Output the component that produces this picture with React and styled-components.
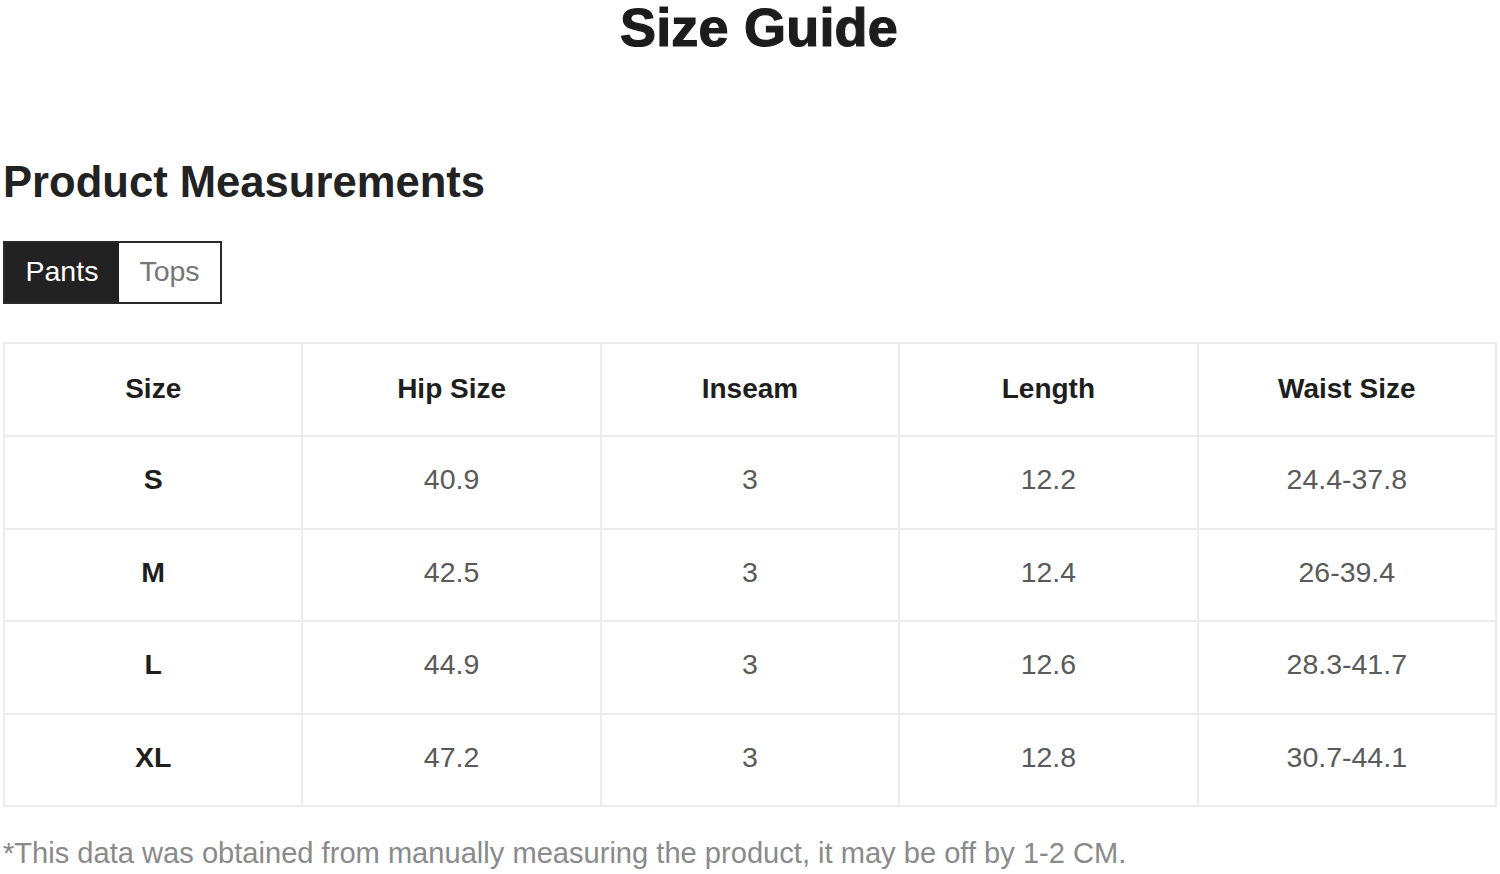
import React from "react";
import styled, { createGlobalStyle } from "styled-components";

const Global = createGlobalStyle`
  html, body { margin: 0; padding: 0; background: #fff; }
  body { font-family: "Liberation Sans", Arial, sans-serif; }
`;

const Page = styled.div`
  width: 1500px;
  box-sizing: border-box;
  padding: 0 3px;
`;

const Title = styled.h1`
  margin: 0;
  padding-left: 18px;
  text-align: center;
  font-size: 54px;
  line-height: 54px;
  font-weight: 900;
  color: #1c1c1e;
  letter-spacing: 0.2px;
  -webkit-text-stroke: 1.2px #1c1c1e;
`;

const Heading = styled.h2`
  margin: 102px 0 0 0;
  font-size: 43.6px;
  line-height: 1.2;
  font-weight: 700;
  color: #222;
`;

const Tabs = styled.div`
  display: inline-flex;
  margin-top: 33px;
  border: 2px solid #2a2a2a;
  height: 63px;
  box-sizing: border-box;
`;

const Tab = styled.button`
  border: none;
  margin: 0;
  font-family: "Liberation Sans", Arial, sans-serif;
  font-size: 28.5px;
  padding: 0 ${(p) => (p.$active ? "20.5px" : "20.5px")} 2px;
  background: ${(p) => (p.$active ? "#222" : "#fff")};
  color: ${(p) => (p.$active ? "#fff" : "#777")};
  cursor: pointer;
  display: flex;
  align-items: center;
`;

const TableWrap = styled.div`
  margin-top: 38px;
`;

const Table = styled.table`
  width: 100%;
  border-collapse: collapse;
  table-layout: fixed;
  border: 2px solid #ececec;
`;

const Row = styled.tr`
  height: 92.6px;
`;

const HeadCell = styled.th`
  border: 2px solid #ececec;
  font-size: 28px;
  font-weight: 700;
  color: #1e1e1e;
  text-align: center;
  padding: 0 0 2px 0;
`;

const Cell = styled.td`
  border: 2px solid #ececec;
  font-size: 28.5px;
  font-weight: ${(p) => (p.$strong ? 700 : 400)};
  color: ${(p) => (p.$strong ? "#1e1e1e" : "#5a5a5a")};
  text-align: center;
  padding: 0 0 5px 0;
`;

const Note = styled.p`
  margin: 29px 0 0 0;
  font-size: 29.1px;
  line-height: 1.2;
  color: #8a8a8a;
`;

const headers = ["Size", "Hip Size", "Inseam", "Length", "Waist Size"];
const rows = [
  ["S", "40.9", "3", "12.2", "24.4-37.8"],
  ["M", "42.5", "3", "12.4", "26-39.4"],
  ["L", "44.9", "3", "12.6", "28.3-41.7"],
  ["XL", "47.2", "3", "12.8", "30.7-44.1"],
];

export default function App() {
  const [tab, setTab] = React.useState("Pants");
  return (
    <Page>
      <Global />
      <Title>Size Guide</Title>
      <Heading>Product Measurements</Heading>
      <Tabs>
        {["Pants", "Tops"].map((t) => (
          <Tab key={t} $active={tab === t} onClick={() => setTab(t)}>
            {t}
          </Tab>
        ))}
      </Tabs>
      <TableWrap>
        <Table>
          <thead>
            <Row>
              {headers.map((h) => (
                <HeadCell key={h}>{h}</HeadCell>
              ))}
            </Row>
          </thead>
          <tbody>
            {rows.map((r) => (
              <Row key={r[0]}>
                {r.map((c, i) => (
                  <Cell key={i} $strong={i === 0}>
                    {c}
                  </Cell>
                ))}
              </Row>
            ))}
          </tbody>
        </Table>
      </TableWrap>
      <Note>*This data was obtained from manually measuring the product, it may be off by 1-2 CM.</Note>
    </Page>
  );
}
